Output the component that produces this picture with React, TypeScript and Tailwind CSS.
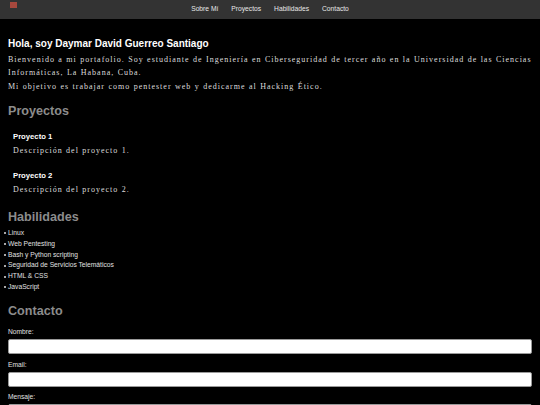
import { useState } from "react";

const NAV = ["Sobre Mí", "Proyectos", "Habilidades", "Contacto"];

const PROJECTS = [
  { title: "Proyecto 1", text: "Descripción del proyecto 1." },
  { title: "Proyecto 2", text: "Descripción del proyecto 2." },
];

const SKILLS = [
  "Linux",
  "Web Pentesting",
  "Bash y Python scripting",
  "Seguridad de Servicios Telemáticos",
  "HTML & CSS",
  "JavaScript",
];

const serif =
  "font-['Liberation_Serif','Times_New_Roman',serif] text-[8px] leading-[13.4px] tracking-[1px] [word-spacing:0.45px] text-[#dcdcdc]";

const App = () => {
  const [form, setForm] = useState({ name: "", email: "", message: "" });

  return (
    <div className="min-h-screen bg-black font-['Liberation_Sans',Arial,sans-serif] text-white">
      <header className="relative flex h-[19px] items-center justify-center bg-[#333333]">
        {/* menu toggle */}
        <svg className="absolute left-[10px] top-[2px]" width="7" height="6" viewBox="0 0 7 6">
          <rect width="7" height="6" fill="#8f3a30" />
          <rect y="0.5" width="7" height="1" fill="#c0564a" />
          <rect y="2.5" width="7" height="1" fill="#c0564a" />
          <rect y="4.5" width="7" height="1" fill="#c0564a" />
        </svg>
        <nav className="flex gap-[13px] text-[6.7px] text-[#e8e8e8]">
          {NAV.map((item) => (
            <a key={item} href={`#${item}`}>
              {item}
            </a>
          ))}
        </nav>
      </header>

      <main className="px-[8px]">
        <section className="pt-[19px]">
          <h1 className="text-[10px] font-bold leading-[12px] text-white">Hola, soy Daymar David Guerreo Santiago</h1>
          <p className={`mt-[3px] ${serif}`}>
            Bienvenido a mi portafolio. Soy estudiante de Ingeniería en Ciberseguridad de tercer año en la Universidad de las Ciencias
            Informáticas, La Habana, Cuba.
            <br />
            Mi objetivo es trabajar como pentester web y dedicarme al Hacking Ético.
          </p>
        </section>

        <section className="mt-[11px]">
          <h2 className="text-[12.6px] font-bold leading-[15px] text-[#8c8c8c]">Proyectos</h2>
          <div className="mt-[12.5px] flex flex-col gap-[13.5px] px-[5px]">
            {PROJECTS.map((p) => (
              <div key={p.title}>
                <h3 className="text-[7.7px] font-bold leading-[10px] text-white">{p.title}</h3>
                <p className={`mt-[2px] ${serif}`}>{p.text}</p>
              </div>
            ))}
          </div>
        </section>

        <section className="mt-[14px]">
          <h2 className="text-[12.6px] font-bold leading-[15px] text-[#8c8c8c]">Habilidades</h2>
          <ul className="mt-[3px] -ml-[8px] text-[6.7px] leading-[10.8px] text-[#e0e0e0]">
            {SKILLS.map((s) => (
              <li key={s} className="flex items-center">
                <span className="ml-[3.5px] mr-[2.5px] h-[2px] w-[2px] rounded-full bg-[#e0e0e0]" />
                <span>{s}</span>
              </li>
            ))}
          </ul>
        </section>

        <section className="mt-[11px]">
          <h2 className="text-[12.6px] font-bold leading-[15px] text-[#8c8c8c]">Contacto</h2>
          <form className="mt-[8px] flex flex-col text-[6.7px] leading-[9px] text-[#e0e0e0]">
            <label>Nombre:</label>
            <input
              className="mt-[3px] h-[15px] w-full rounded-[2px] border border-[#9a9a9a] bg-white text-black outline-none"
              value={form.name}
              onChange={(e) => setForm({ ...form, name: e.target.value })}
            />
            <label className="mt-[6px]">Email:</label>
            <input
              className="mt-[3px] h-[15px] w-full rounded-[2px] border border-[#9a9a9a] bg-white text-black outline-none"
              value={form.email}
              onChange={(e) => setForm({ ...form, email: e.target.value })}
            />
            <label className="mt-[5px]">Mensaje:</label>
            <textarea
              className="mt-[3px] h-[40px] w-full rounded-[2px] border border-[#9a9a9a] bg-white text-black outline-none"
              value={form.message}
              onChange={(e) => setForm({ ...form, message: e.target.value })}
            />
          </form>
        </section>
      </main>
    </div>
  );
};

export default App;
